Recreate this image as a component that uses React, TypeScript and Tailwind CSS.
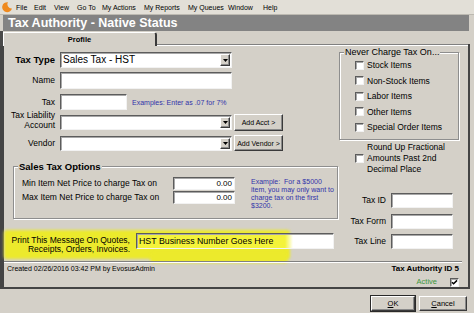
import type { ReactNode } from "react";

const sunken =
  "border border-t-[#5c5c5c] border-l-[#5c5c5c] border-b-[#f2f2f2] border-r-[#f2f2f2] shadow-[inset_1px_1px_0_#a8a8a8]";
const raised =
  "bg-[#d4d0c8] border border-t-white border-l-white border-b-[#3a3a3a] border-r-[#3a3a3a] shadow-[inset_-1px_-1px_0_#8a8a8a]";
const etched = "border border-[#8e8e8e] shadow-[inset_1px_1px_0_#fff,1px_1px_0_#fff]";

const menu = [
  { t: "File", w: "w-[18px]" },
  { t: "Edit", w: "w-[20px]" },
  { t: "View", w: "w-[23px]" },
  { t: "Go To", w: "w-[25px]" },
  { t: "My Actions", w: "w-[42px]" },
  { t: "My Reports", w: "w-[44px]" },
  { t: "My Queues", w: "w-[40px]" },
  { t: "Window", w: "w-[35px]" },
  { t: "Help", w: "w-[20px]" },
];

const neverItems = ["Stock Items", "Non-Stock Items", "Labor Items", "Other Items", "Special Order Items"];

function Select({ className = "", children }: { className?: string; children?: ReactNode }) {
  return (
    <div className={`${sunken} bg-white flex items-center ${className}`}>
      <span className="flex-1 pl-[2px] truncate">{children}</span>
      <span className={`${raised} w-[10px] h-[calc(100%-2px)] mr-[1px] flex items-center justify-center`}>
        <svg width="5" height="3" viewBox="0 0 5 3">
          <path d="M0 0h5L2.5 3z" fill="#000" />
        </svg>
      </span>
    </div>
  );
}

function Check({ checked }: { checked?: boolean }) {
  return (
    <span className={`${sunken} bg-white w-[9px] h-[9px] shrink-0 flex items-center justify-center`}>
      {checked && (
        <svg width="7" height="7" viewBox="0 0 7 7">
          <path d="M1 3.2l1.6 1.6L6 1.4" stroke="#000" strokeWidth="1.5" fill="none" />
        </svg>
      )}
    </span>
  );
}

function Logo() {
  return (
    <svg width="12" height="12" viewBox="0 0 12 12">
      <path d="M7 1.2A5 5 0 1 0 11 7.5 4.2 4.2 0 0 1 7 1.2z" fill="#ef8a1f" />
    </svg>
  );
}

export default function App() {
  return (
    <div className="w-[474px] h-[313px] overflow-hidden bg-[#d4d0c8] text-black font-['Liberation_Sans',Arial,sans-serif] leading-none select-none">
      {/* menu bar */}
      <div className="h-[15px] flex items-center bg-[#e2dfd7] border-b border-[#bcb9b1] text-[7px]">
        <span className="w-[16px] pl-[1px] flex">
          <Logo />
        </span>
        {menu.map((m) => (
          <span key={m.t} className={m.w}>
            {m.t}
          </span>
        ))}
      </div>

      {/* title */}
      <div className="h-[16px] flex">
        <div className="ml-[3px] w-[466px] bg-[#838383] flex items-center pl-[5px] text-white font-bold text-[12.5px]">
          Tax Authority - Native Status
        </div>
      </div>

      {/* tabs */}
      <div className="w-[470px] h-[15px] flex items-end">
        <div className="w-[3px] h-full bg-[#4a4a4a]" />
        <div className="w-[154px] h-[14px] border-t border-l border-white border-r-2 border-r-[#3a3a3a] rounded-tr-[3px] flex items-center justify-center font-bold text-[7.5px]">
          Profile
        </div>
        <div className="flex-1 h-[2px] border-t border-[#808080] bg-white" />
        <div className="w-[2px] h-[2px] bg-[#3f3f3f]" />
      </div>

      {/* panel */}
      <div className="relative w-[470px] h-[243px] border-l-4 border-r-2 border-b-2 border-[#444] flex flex-col">
        <div className="absolute left-0 top-[184px] w-[286px] h-[29px] bg-[#ecea2c] blur-[1.5px] rounded-[3px]" />
        <div className="absolute left-[146px] top-[205px] w-[138px] h-[12px] bg-[#ecea2c] blur-[1.5px] rounded-[3px]" />

        <div className="relative h-[215px] flex">
          {/* left column */}
          <div className="w-[334px] pt-[6px] flex flex-col text-[8.5px]">
            <div className="h-[16px] flex items-center">
              <span className="w-[51px] mr-[5px] text-right font-bold text-[9.5px]">Tax Type</span>
              <Select className="w-[172px] h-[16px] text-[10px]">Sales Tax - HST</Select>
            </div>
            <div className="mt-[4px] h-[17px] flex items-center">
              <span className="w-[51px] mr-[5px] text-right">Name</span>
              <div className={`${sunken} bg-white w-[172px] h-[17px]`} />
            </div>
            <div className="mt-[5px] h-[16px] flex items-center">
              <span className="w-[51px] mr-[5px] text-right">Tax</span>
              <div className={`${sunken} bg-white w-[67px] h-[16px]`} />
              <span className="ml-[5px] text-[7px] text-[#3232a8]">Examples: Enter as .07 for 7%</span>
            </div>
            <div className="h-[21px] flex items-start">
              <span className="w-[51px] mr-[5px] text-right leading-[10px]">
                Tax Liability
                <br />
                Account
              </span>
              <Select className="mt-[5px] w-[172px] h-[15px]" />
              <button className={`${raised} mt-[4px] ml-[2px] w-[49px] h-[17px] text-[7px]`}>Add Acct &gt;</button>
            </div>
            <div className="mt-[4px] h-[16px] flex items-center">
              <span className="w-[51px] mr-[5px] text-right">Vendor</span>
              <Select className="w-[172px] h-[15px]" />
              <button className={`${raised} ml-[2px] w-[49px] h-[16px] text-[7px]`}>Add Vendor &gt;</button>
            </div>

            <fieldset className={`${etched} mt-[10px] ml-[9px] w-[325px] h-[58px]`}>
              <legend className="ml-[4px] px-[1px] font-bold text-[9.5px] leading-[11px] bg-[#d4d0c8]">
                Sales Tax Options
              </legend>
              <div className="flex items-start">
                <div className="pl-[8px] pt-[5px] flex flex-col gap-[1px]">
                  <div className="h-[13px] flex items-center">
                    <span className="w-[151px]">Min Item Net Price to charge Tax on</span>
                    <div className={`${sunken} bg-white w-[62px] h-[13px] flex items-center justify-end pr-[2px] text-[8px]`}>0.00</div>
                  </div>
                  <div className="h-[13px] flex items-center">
                    <span className="w-[151px]">Max Item Net Price to charge Tax on</span>
                    <div className={`${sunken} bg-white w-[62px] h-[13px] flex items-center justify-end pr-[2px] text-[8px]`}>0.00</div>
                  </div>
                </div>
                <div className="ml-[16px] pt-[6px] text-[7px] leading-[8px] text-[#3232a8] whitespace-pre">
                  {"Example:  For a $5000\nitem, you may only want to\ncharge tax on the first\n$3200."}
                </div>
              </div>
            </fieldset>

            <div className="mt-[14px] flex items-start">
              <span className="w-[126px] mt-[2.5px] text-right leading-[9px]">
                Print This Message On Quotes,
                <br />
                Receipts, Orders, Invoices.
              </span>
              <div
                className={`${sunken} ml-[6px] w-[198px] h-[16px] flex items-center pl-[2px] text-[8.8px] bg-[linear-gradient(90deg,#f4f33a_148px,#ffffff_156px)]`}
              >
                HST Business Number Goes Here
              </div>
            </div>
          </div>

          {/* right column */}
          <div className="w-[130px] flex flex-col text-[8.5px]">
            <fieldset className={`${etched} mt-[0.5px] ml-[1px] w-[120px] h-[93.5px]`}>
              <legend className="ml-[4px] px-[1px] text-[9px] leading-[11px] bg-[#d4d0c8]">Never Charge Tax On...</legend>
              <div className="pl-[15px] flex flex-col">
                {neverItems.map((t) => (
                  <div key={t} className="h-[15.5px] flex items-center gap-[3px]">
                    <Check />
                    <span>{t}</span>
                  </div>
                ))}
              </div>
            </fieldset>
            <div className="mt-[1.5px] pl-[17px] flex items-center gap-[3px]">
              <Check />
              <span className="leading-[11px]">
                Round Up Fractional
                <br />
                Amounts Past 2nd
                <br />
                Decimal Place
              </span>
            </div>
            <div className="mt-[18.5px] flex flex-col gap-[5.5px]">
              {["Tax ID", "Tax Form", "Tax Line"].map((t) => (
                <div key={t} className="h-[15px] flex items-center">
                  <span className="w-[48px] mr-[5px] text-right">{t}</span>
                  <div className={`${sunken} bg-white w-[62px] h-[15px]`} />
                </div>
              ))}
            </div>
          </div>
        </div>

        <div className="relative w-[458px] h-[2px] border-t border-[#808080] bg-white" />

        <div className="relative flex-1 flex justify-between pl-[3px] pr-[9px]">
          <div className="pt-[1px] text-[7px] leading-[10px]">Created 02/26/2016 03:42 PM by EvosusAdmin</div>
          <div className="pt-[1px] flex flex-col items-end">
            <div className="font-bold text-[8px] leading-[10px]">Tax Authority ID 5</div>
            <div className="mt-[3px] h-[10px] flex items-center">
              <span className="text-[7.5px] text-[#3c963c]">Active</span>
              <span className="ml-[13px]">
                <Check checked />
              </span>
            </div>
          </div>
        </div>
      </div>

      {/* buttons */}
      <div className="flex justify-end gap-[4px] pr-[7px] pt-[7px]">
        <button className={`${raised} w-[44px] h-[15px] text-[7.5px] outline outline-1 outline-[#2a2a2a]`}>
          <span className="underline">O</span>K
        </button>
        <button className={`${raised} w-[48px] h-[15px] text-[7.5px]`}>
          <span className="underline">C</span>ancel
        </button>
      </div>
    </div>
  );
}
